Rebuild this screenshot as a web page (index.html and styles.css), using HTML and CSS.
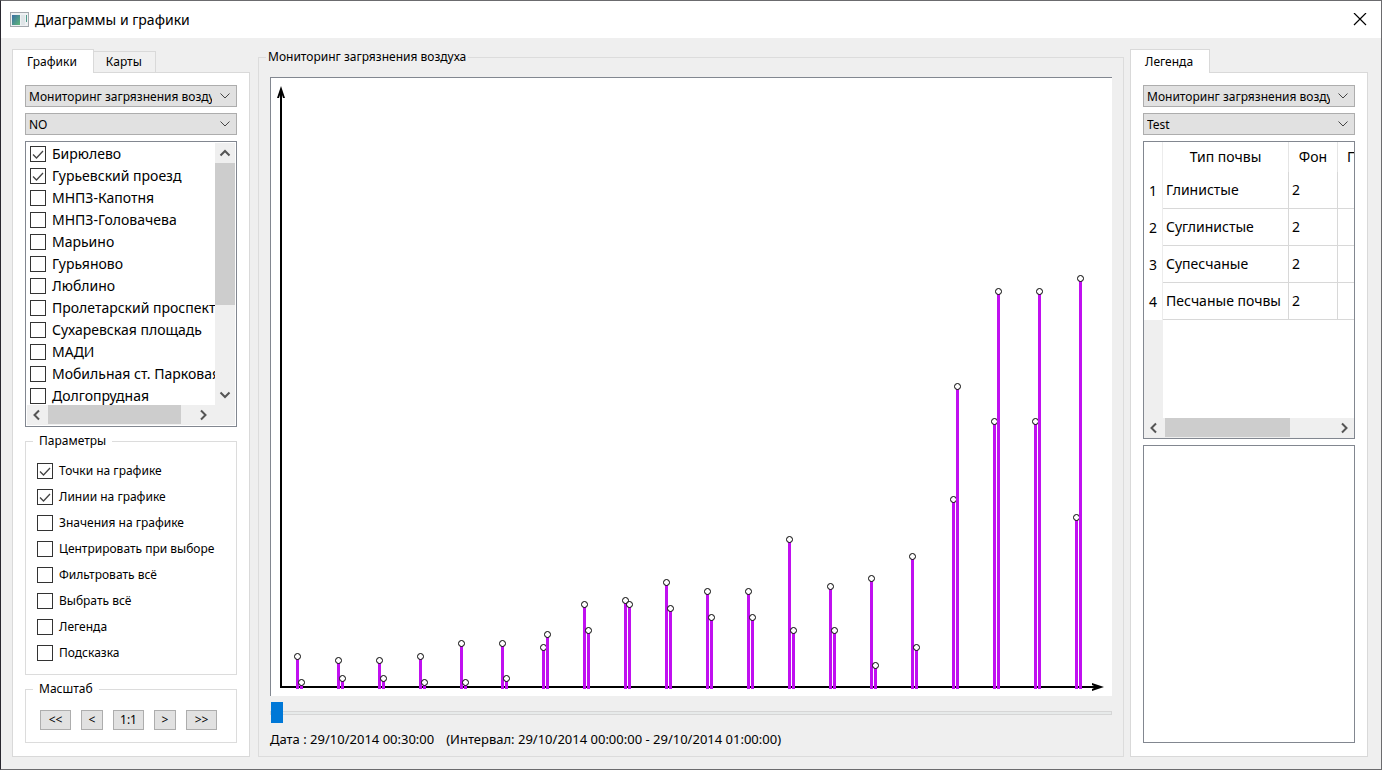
FILE: index.html
```html
<!DOCTYPE html>
<html lang="ru">
<head>
<meta charset="utf-8">
<title>Диаграммы и графики</title>
<link rel="stylesheet" href="styles.css">
</head>
<body>
<div class="window">
  <header class="titlebar">
    <svg class="app-icon" width="20" height="16" viewBox="0 0 20 16">
      <defs><linearGradient id="scr" x1="0" y1="0" x2="1" y2="1"><stop offset="0" stop-color="#3a6ea5"/><stop offset="1" stop-color="#5fb878"/></linearGradient></defs>
      <rect x=".5" y=".5" width="18" height="14" fill="#eef1f3" stroke="#a3a8ad"/>
      <rect x="2" y="3" width="8" height="10" fill="url(#scr)"/>
      <rect x="11" y="3" width="4" height="10" fill="#dfe5e8"/>
      <rect x="16" y="3" width="1" height="7" fill="#4f9a8b"/>
    </svg>
    <h1 class="title">Диаграммы и графики</h1>
    <button class="close" aria-label="Закрыть"><svg width="14" height="14" viewBox="0 0 14 14"><path d="M1 0l12 12M13 0L1 12" stroke="#000" stroke-width="1.2" fill="none"/></svg></button>
  </header>
  <main class="content">
    <section class="side">
      <div class="tabs" role="tablist">
        <button class="tab active" role="tab" aria-selected="true">Графики</button>
        <button class="tab" role="tab" aria-selected="false">Карты</button>
      </div>
      <div class="panel">
        <select class="combo" aria-label="Раздел"><option>Мониторинг загрязнения воздуха</option></select>
        <select class="combo" aria-label="Вещество"><option>NO</option></select>
        <div class="listbox">
          <div class="list-main">
            <div class="list">
              <label class="item"><input type="checkbox" class="check" checked>Бирюлево</label>
              <label class="item"><input type="checkbox" class="check" checked>Гурьевский проезд</label>
              <label class="item"><input type="checkbox" class="check">МНПЗ-Капотня</label>
              <label class="item"><input type="checkbox" class="check">МНПЗ-Головачева</label>
              <label class="item"><input type="checkbox" class="check">Марьино</label>
              <label class="item"><input type="checkbox" class="check">Гурьяново</label>
              <label class="item"><input type="checkbox" class="check">Люблино</label>
              <label class="item"><input type="checkbox" class="check">Пролетарский проспект</label>
              <label class="item"><input type="checkbox" class="check">Сухаревская площадь</label>
              <label class="item"><input type="checkbox" class="check">МАДИ</label>
              <label class="item"><input type="checkbox" class="check">Мобильная ст. Парковая</label>
              <label class="item"><input type="checkbox" class="check">Долгопрудная</label>
            </div>
            <div class="vbar">
              <button class="arrow" aria-label="Вверх"><svg width="12" height="12" viewBox="0 0 12 12"><path d="M1.500 8.500L6 4l4.500 4.500"/></svg></button>
              <div class="vtrack"><div class="vthumb"></div></div>
              <button class="arrow" aria-label="Вниз"><svg width="12" height="12" viewBox="0 0 12 12"><path d="M1.500 3.500L6 8l4.500-4.500"/></svg></button>
            </div>
          </div>
          <div class="hbar with-corner">
            <button class="arrow" aria-label="Влево"><svg width="12" height="12" viewBox="0 0 12 12"><path d="M8 1.500L3.500 6 8 10.500"/></svg></button>
            <div class="htrack"><div class="hthumb wide"></div></div>
            <button class="arrow" aria-label="Вправо"><svg width="12" height="12" viewBox="0 0 12 12"><path d="M4 1.500L8.500 6 4 10.500"/></svg></button>
          </div>
        </div>
        <fieldset class="group">
          <legend>Параметры</legend>
          <div class="options">
            <label class="option"><input type="checkbox" class="check" checked>Точки на графике</label>
            <label class="option"><input type="checkbox" class="check" checked>Линии на графике</label>
            <label class="option"><input type="checkbox" class="check">Значения на графике</label>
            <label class="option"><input type="checkbox" class="check">Центрировать при выборе</label>
            <label class="option"><input type="checkbox" class="check">Фильтровать всё</label>
            <label class="option"><input type="checkbox" class="check">Выбрать всё</label>
            <label class="option"><input type="checkbox" class="check">Легенда</label>
            <label class="option"><input type="checkbox" class="check">Подсказка</label>
          </div>
        </fieldset>
        <fieldset class="group">
          <legend>Масштаб</legend>
          <div class="scale">
            <button class="btn double">&lt;&lt;</button>
            <button class="btn">&lt;</button>
            <button class="btn double">1:1</button>
            <button class="btn">&gt;</button>
            <button class="btn double">&gt;&gt;</button>
          </div>
        </fieldset>
      </div>
    </section>

    <fieldset class="group chart-group">
      <legend>Мониторинг загрязнения воздуха</legend>
      <div class="chart-body">
        <div class="canvas">
          <svg id="chart" class="chart" viewBox="0 0 841 618" preserveAspectRatio="xMinYMax meet" role="img" aria-label="Мониторинг загрязнения воздуха">
            <path d="M10 609V12M9 609H830" stroke="#000" stroke-width="2" fill="none"/>
            <path d="M10 8l-4 12h2l1-3h2l1 3h2z" fill="#000"/>
            <path d="M833 609l-12-4v2l4 2-4 2v2z" fill="#000"/>
          </svg>
        </div>
        <input class="slider" type="range" min="0" max="100" value="0" aria-label="Дата">
        <p class="status"><span>Дата : 29/10/2014 00:30:00</span><span>(Интервал: 29/10/2014 00:00:00 - 29/10/2014 01:00:00)</span></p>
      </div>
    </fieldset>

    <section class="side">
      <div class="tabs" role="tablist">
        <button class="tab active" role="tab" aria-selected="true">Легенда</button>
      </div>
      <div class="panel">
        <select class="combo" aria-label="Раздел легенды"><option>Мониторинг загрязнения воздуха</option></select>
        <select class="combo" aria-label="Легенда"><option>Test</option></select>
        <div class="tablebox">
          <div class="table-view">
            <table class="soil">
              <colgroup><col class="c-num"><col class="c-type"><col class="c-bg"><col></colgroup>
              <thead><tr><th></th><th>Тип почвы</th><th>Фон</th><th class="last">ПДК</th></tr></thead>
              <tbody>
                <tr><th>1</th><td>Глинистые</td><td>2</td><td></td></tr>
                <tr><th>2</th><td>Суглинистые</td><td>2</td><td></td></tr>
                <tr><th>3</th><td>Супесчаные</td><td>2</td><td></td></tr>
                <tr><th>4</th><td>Песчаные почвы</td><td>2</td><td></td></tr>
              </tbody>
            </table>
            <div class="row-strip"></div>
          </div>
          <div class="hbar">
            <button class="arrow" aria-label="Влево"><svg width="12" height="12" viewBox="0 0 12 12"><path d="M8 1.500L3.500 6 8 10.500"/></svg></button>
            <div class="htrack"><div class="hthumb"></div></div>
            <button class="arrow" aria-label="Вправо"><svg width="12" height="12" viewBox="0 0 12 12"><path d="M4 1.500L8.500 6 4 10.500"/></svg></button>
          </div>
        </div>
        <textarea class="notes" aria-label="Описание"></textarea>
      </div>
    </section>
  </main>
</div>
<script src="chart.js"></script>
</body>
</html>
```
FILE: styles.css
```css
* { box-sizing: border-box; }
body {
  margin: 0;
  font: 12px/16px "Noto Sans", "Open Sans", sans-serif;
  color: #000;
}
button, select, textarea { font: inherit; color: inherit; }
svg { display: block; }

.window {
  display: flex;
  flex-direction: column;
  height: 100vh;
  min-height: 700px;
  background: #efefef;
  border: 1px solid #6b6b6e;
  border-left-color: #29272f;
}
.titlebar {
  display: flex;
  align-items: center;
  height: 37px;
  padding: 0 14px 0 9px;
  background: #fff;
}
.title { flex: 1; margin: 0 0 0 5px; font-size: 14px; font-weight: 400; line-height: 20px; }
.close { padding: 0; border: 0; background: none; }

.content {
  flex: 1;
  min-height: 0;
  display: grid;
  grid-template-columns: 238px minmax(0, 1fr) 238px;
  column-gap: 6px;
  padding: 11px 13px 12px 11px;
}
.side { display: flex; flex-direction: column; min-height: 0; }
.tabs { display: flex; align-items: flex-end; height: 23px; }
.tab {
  height: 21px;
  padding: 0 13px 0 12px;
  border: 1px solid #d9d9d9;
  border-bottom: 0;
  border-left: 0;
  background: #f0f0f0;
}
.tab.active {
  position: relative;
  height: 24px;
  margin-bottom: -1px;
  padding: 0 16px 0 14px;
  border-left: 1px solid #d9d9d9;
  background: #fff;
}
.panel {
  flex: 1;
  min-height: 0;
  display: flex;
  flex-direction: column;
  gap: 6px;
  padding: 12px 12px 13px;
  border: 1px solid #d9d9d9;
  background: #fff;
}
.combo {
  flex: none;
  width: 100%;
  height: 22px;
  padding: 2px 24px 0 3px;
  border: 1px solid #adadad;
  border-radius: 0;
  appearance: none;
  background: #e1e1e1 url("data:image/svg+xml,%3Csvg xmlns='http://www.w3.org/2000/svg' width='10' height='6'%3E%3Cpath d='M.5 .5L5 5 9.500 .5' fill='none' stroke='%23444'/%3E%3C/svg%3E") no-repeat right 6px center;
}
.listbox, .tablebox {
  flex: 1;
  min-height: 0;
  display: flex;
  flex-direction: column;
  border: 1px solid #828790;
}
.listbox { padding: 1px; }
.list-main { flex: 1; min-height: 0; display: flex; }
.list { flex: 1; min-width: 0; overflow: hidden; padding-left: 3px; font-size: 14px; }
.item { display: flex; align-items: center; gap: 6px; height: 22px; white-space: nowrap; }
.check {
  flex: none;
  width: 16px;
  height: 16px;
  margin: 0;
  border: 1px solid #333;
  appearance: none;
  background: #fff;
}
.check:checked {
  background: #fff url("data:image/svg+xml,%3Csvg xmlns='http://www.w3.org/2000/svg' width='14' height='14'%3E%3Cpath d='M2 7.500L5.500 11 12 4' fill='none' stroke='%23444' stroke-width='1.300'/%3E%3C/svg%3E") no-repeat center;
}
.vbar { display: flex; flex-direction: column; width: 20px; background: #efefef; }
.vtrack { flex: 1; }
.vthumb { height: 64%; background: #cdcdcd; }
.arrow {
  flex: none;
  display: grid;
  place-items: center;
  width: 20px;
  height: 20px;
  padding: 0;
  border: 0;
  background: none;
}
.arrow path { fill: none; stroke: #555; stroke-width: 2; }
.hbar { flex: none; display: flex; height: 20px; background: #efefef; }
.with-corner { padding-right: 22px; }
.htrack { flex: 1; padding-left: 1px; }
.hthumb { width: 74%; height: 19px; background: #cdcdcd; }
.hthumb.wide { width: 92%; }

.group { min-width: 0; margin: 0; padding: 0; border: 1px solid #dcdcdc; }
.group legend { margin-left: 7px; padding: 0 6px; }
.options { padding: 9px 11px 8px; }
.option { display: flex; align-items: center; gap: 6px; height: 26px; }
.scale { display: flex; gap: 10px; padding: 13px 14px 12px; }
.btn { width: 22px; height: 20px; padding: 0; border: 1px solid #adadad; background: #e1e1e1; line-height: 18px; }
.btn.double { width: 31px; }

.chart-group { display: flex; flex-direction: column; min-height: 0; margin-left: 2px; }
.chart-group > legend { padding: 0 2px; }
.chart-body { flex: 1; min-height: 0; display: flex; flex-direction: column; padding: 12px 11px 9px; }
.canvas {
  flex: 1;
  min-height: 0;
  border-top: 1px solid #828790;
  border-left: 1px solid #828790;
  background: #fff;
}
.chart { width: 100%; height: 100%; }
.slider { width: 100%; height: 21px; margin: 6px 0 8px; appearance: none; background: none; }
.slider::-webkit-slider-runnable-track { height: 4px; border: 1px solid #d6d6d6; background: #e7eaea; }
.slider::-webkit-slider-thumb { width: 12px; height: 21px; margin-top: -10px; appearance: none; background: #0078d7; }
.status { display: flex; gap: 12px; margin: 0; font-size: 13px; white-space: nowrap; }

.table-view { flex: 1; min-height: 0; display: flex; flex-direction: column; overflow: hidden; }
.soil { width: 240px; flex: none; table-layout: fixed; border-collapse: separate; border-spacing: 0; font-size: 14px; }
.c-num { width: 19px; }
.c-type { width: 126px; }
.c-bg { width: 49px; }
.soil th, .soil td { height: 37px; padding: 0 3px; border-right: 1px solid #d8d8d8; font-weight: 400; text-align: left; white-space: nowrap; }
.soil td { border-bottom: 1px solid #d8d8d8; }
.soil thead th { height: 30px; border-color: #e5e5e5; text-align: center; }
.soil th:first-child { padding: 0; border-color: #ececec; text-align: center; }
.soil thead .last { padding: 0 9px; text-align: left; }
.row-strip { flex: 1; width: 19px; background: #efefef; }
.notes { flex: 1; min-height: 0; width: 100%; padding: 0; border: 1px solid #828790; resize: none; }
```
FILE: chart.js
```js
// Heights of the stems above the base line, one array per station.
const series = [
  [33, 29, 29, 33, 46, 46, 42, 85, 89, 107, 98, 98, 150, 103, 111, 133, 190, 268, 268, 172],
  [7, 11, 11, 7, 7, 11, 55, 59, 85, 81, 72, 72, 59, 59, 24, 42, 303, 398, 398, 411]
].map((values) => values.slice());
const base = 611;
const step = 41;
const chart = document.getElementById("chart");

function add(name, attrs) {
  const node = document.createElementNS("http://www.w3.org/2000/svg", name);
  for (const key in attrs) node.setAttribute(key, attrs[key]);
  chart.appendChild(node);
}

series.forEach((values, s) => {
  values.forEach((value, i) => {
    const x = 26.5 + step * i + 4 * s;
    const y = base - value + 0.5;
    add("path", { d: `M${x} ${base}V${y}`, stroke: "#c010f0", "stroke-width": 3 });
    add("circle", { cx: x, cy: y, r: 3, fill: "#fff", stroke: "#000" });
  });
});
```
